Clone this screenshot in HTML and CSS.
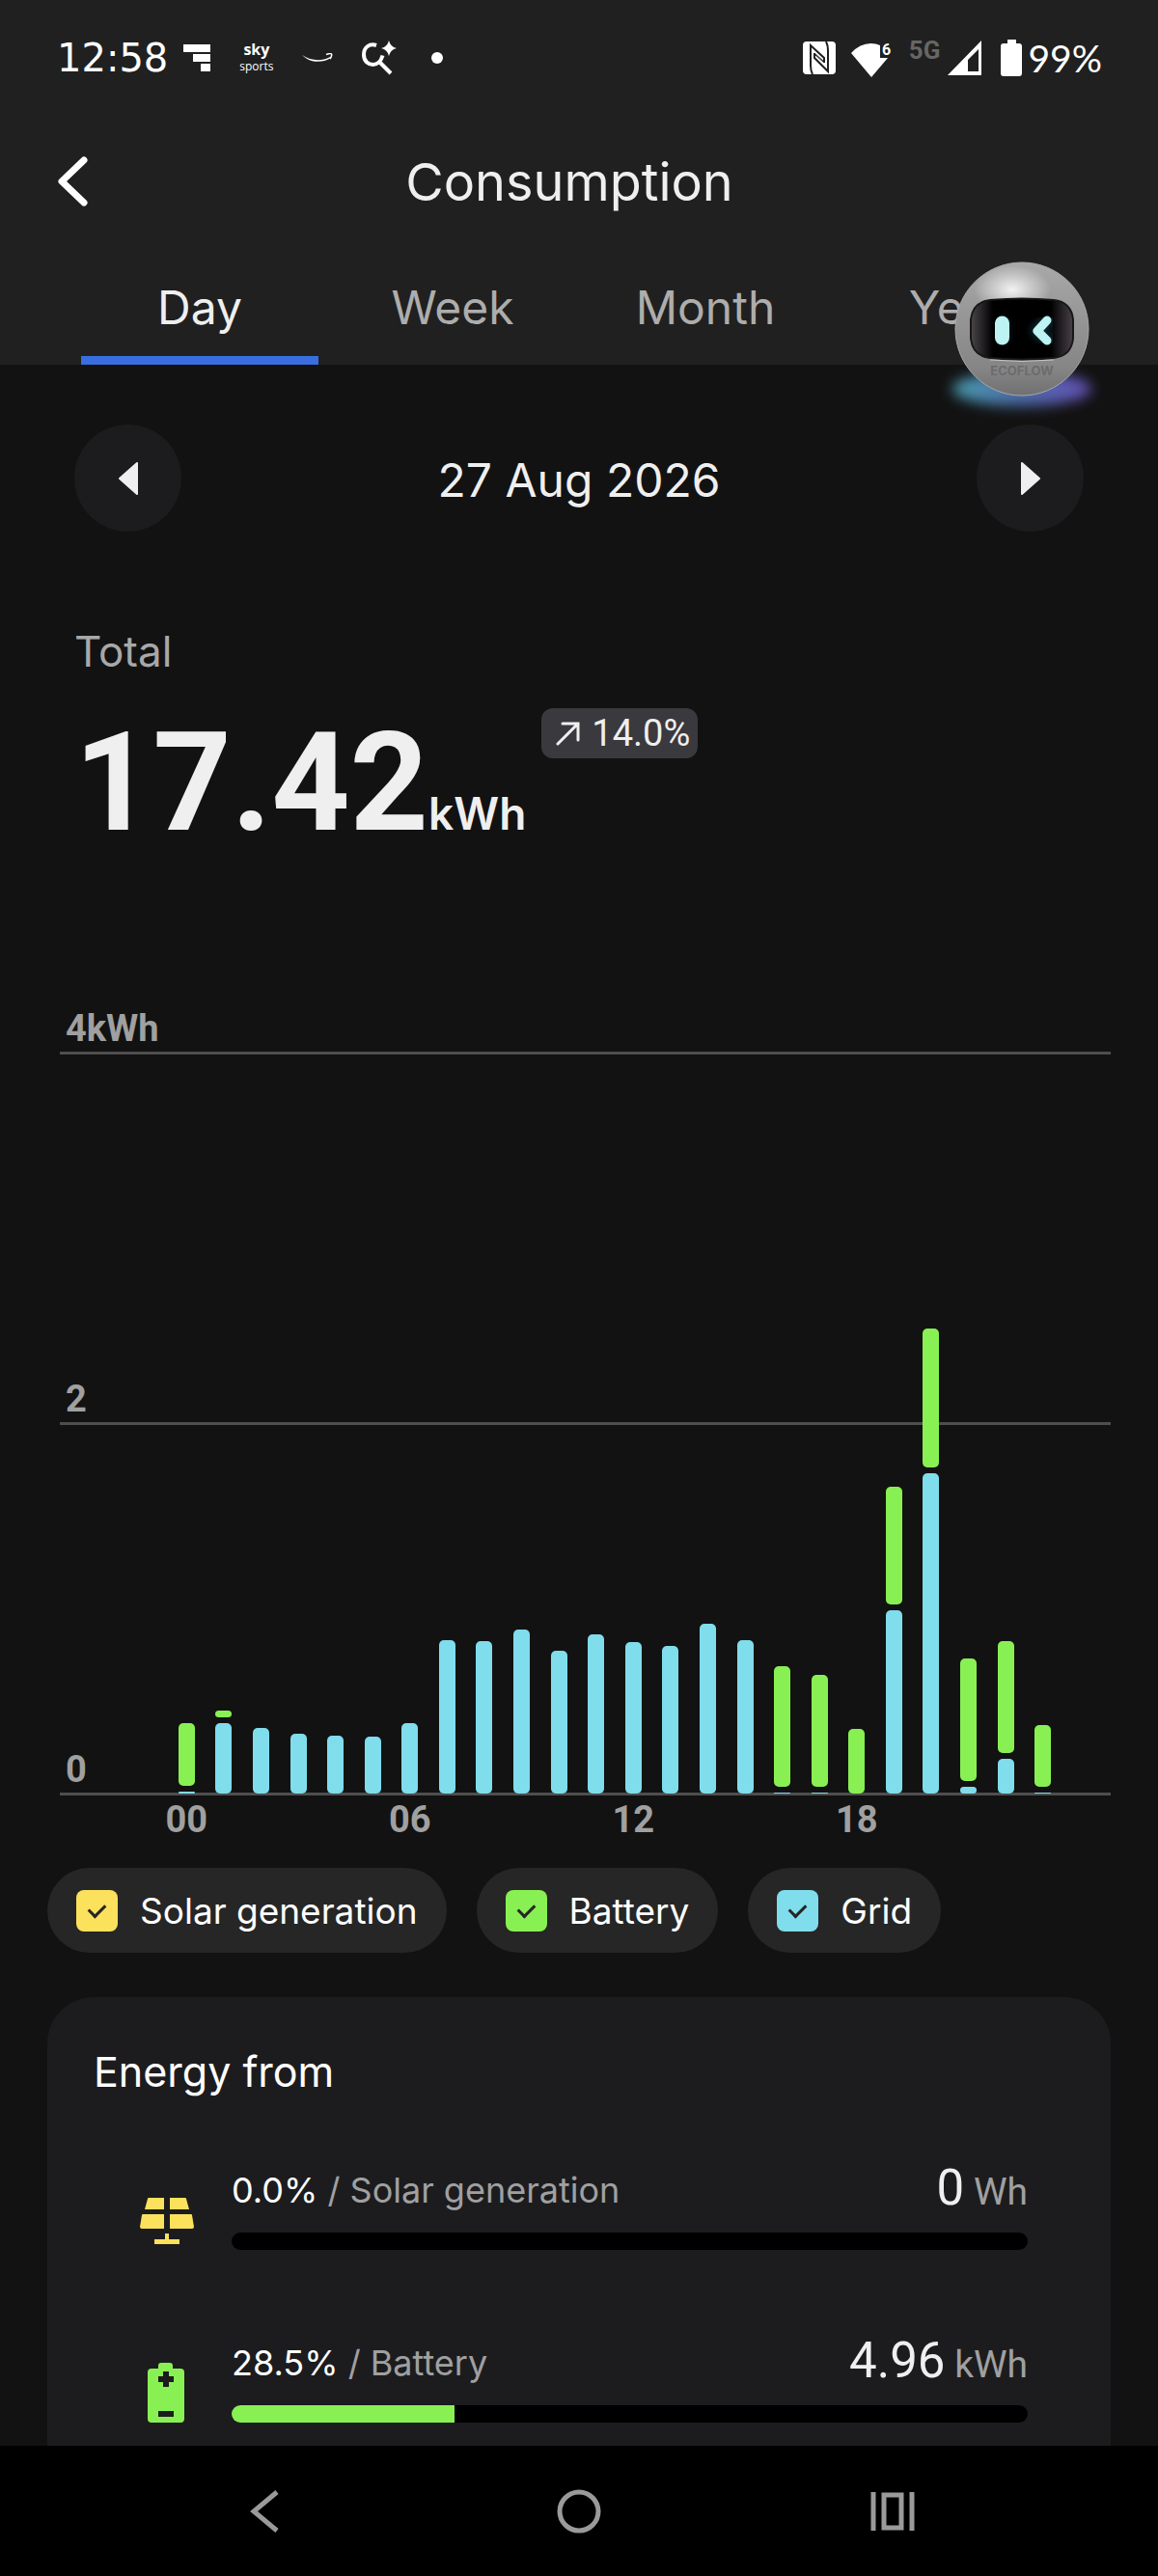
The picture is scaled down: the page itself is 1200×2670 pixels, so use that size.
FILE: index.html
```html
<!DOCTYPE html>
<html lang="en">
  <head>
    <meta charset="UTF-8" />
    <meta name="viewport" content="width=device-width, initial-scale=1.0" />
    <title>Consumption</title>
    <link rel="stylesheet" href="styles.css">
  </head>
  <body>
    <header class="header">
      <!-- System status bar -->
      <div class="status">
        <div class="status-left">
          <span class="clock">12:58</span>
          <svg width="28" height="28" viewBox="0 0 28 28" fill="#fff"><path d="M0 0h28v8H0zM10 10h18v8H10zM18 20h10v8H18z" /></svg>
          <span class="sky"><b>sky</b><small>sports</small></span>
          <svg width="32" height="10" viewBox="0 0 32 10" fill="none"><path d="M0 2C9 8 20 9 29 4l1 1C20 11 8 10 0 2z" fill="#fff" /><path d="M25 1.500c3-1 5-1 5.500-.5s0 3-1.500 5" stroke="#fff" stroke-width="1.500" /></svg>
          <svg width="36" height="36" viewBox="0 0 36 36" fill="none"><path d="M15 5C8 2.500 2 7 2 14.500S7 25 11.500 25C16 25 20 21 21.500 15.500" stroke="#fff" stroke-width="4" /><path d="M18.500 22.500L30 34" stroke="#fff" stroke-width="4" /><path d="M28 0q1.500 6.500 8 8-6.500 1.500-8 8-1.500-6.500-8-8 6.500-1.500 8-8z" fill="#fff" /></svg>
          <span class="dot"></span>
        </div>
        <div class="status-right">
          <svg width="34" height="36" viewBox="0 0 34 36"><rect y="1" width="34" height="34" rx="4" fill="#fff" /><g fill="none" stroke="#202020" stroke-width="2"><path d="M10 35C8.500 32 8 30 8 26V5l14 13v5" /><path d="M24 1c1.500 3 2 5 2 9v22L12 18v-5" /><path d="M13 15l9 8M12 13l10 9" stroke-width="1" /></g></svg>
          <svg width="44" height="40" viewBox="0 -4 44 40"><path d="M0 11Q9 1 20.500 1 26 1 30 3v13h8L21 36z" fill="#fff" /><text x="32" y="13" class="wifi-gen">6</text></svg>
          <span class="cell">
            <span class="network">5G</span>
            <svg width="35" height="36" viewBox="0 0 35 36"><path fill-rule="evenodd" d="M35 0v36H0zM32 9L21 20v12h11z" fill="#fff" /></svg>
          </span>
          <span class="power">
            <svg width="22" height="38" viewBox="0 0 22 38"><path d="M7 0h9v4h3q3 0 3 3v28q0 3-3 3H3q-3 0-3-3V7q0-3 3-3h4z" fill="#fff" /></svg>
            99%
          </span>
        </div>
      </div>

      <div class="title-bar">
        <button class="back" aria-label="Back">
          <svg width="32" height="52" viewBox="0 0 32 52" fill="none"><path d="M28 4L5 26l23 22" stroke="#fff" stroke-width="7" stroke-linecap="round" stroke-linejoin="round" /></svg>
        </button>
        <h1>Consumption</h1>
      </div>

      <nav class="tabs">
        <button class="tab active">Day</button>
        <button class="tab">Week</button>
        <button class="tab">Month</button>
        <button class="tab">Year</button>
      </nav>
    </header>

    <!-- Floating assistant -->
    <button class="assistant" aria-label="Assistant">
      <svg width="180" height="180" viewBox="0 0 180 180">
        <defs>
          <linearGradient id="glow"><stop offset="0" stop-color="#4a9db0" /><stop offset=".5" stop-color="#4c6aa8" /><stop offset="1" stop-color="#6650b8" /></linearGradient>
          <linearGradient id="shell" x2="0" y2="1"><stop offset="0" stop-color="#a9a9aa" /><stop offset=".5" stop-color="#929293" /><stop offset=".8" stop-color="#858586" /><stop offset="1" stop-color="#707071" /></linearGradient>
          <radialGradient id="shine"><stop offset="0" stop-color="#f2f2f2" /><stop offset="1" stop-color="#f2f2f2" stop-opacity="0" /></radialGradient>
          <linearGradient id="visor"><stop offset="0" stop-color="#4a464a" /><stop offset=".22" stop-color="#000" /><stop offset=".78" stop-color="#000" /><stop offset="1" stop-color="#4a4149" /></linearGradient>
          <filter id="blur" x="-20%" y="-50%" width="140%" height="200%"><feGaussianBlur stdDeviation="7" /></filter>
          <filter id="soft"><feGaussianBlur stdDeviation="3" /></filter>
        </defs>
        <ellipse cx="90" cy="137" rx="72" ry="18" fill="url(#glow)" filter="url(#blur)" />
        <circle cx="90" cy="75" r="69" fill="url(#shell)" stroke="#a8a8a8" />
        <ellipse cx="80" cy="34" rx="40" ry="25" fill="url(#shine)" />
        <path d="M37 65q2-18 20-20 33-3 66 0 18 2 20 20v20q-2 18-20 20-33 3-66 0-18-2-20-20z" fill="url(#visor)" stroke="#171718" stroke-width="2" />
        <path d="M57 107q33 3 66 0" stroke="#c4c4c4" fill="none" />
        <g fill="none" stroke-linecap="round" stroke-linejoin="round">
          <path d="M69.500 69v15M117 66l-11 11 11 10" stroke="#1a6070" stroke-width="15" opacity=".4" filter="url(#soft)" />
          <path d="M69.500 69v15" stroke="#bdf3f3" stroke-width="15" />
          <path d="M116 66l-10 11 10 10" stroke="#bdf3f3" stroke-width="9" />
        </g>
        <text x="90" y="123" text-anchor="middle" class="brand">ECOFLOW</text>
      </svg>
    </button>

    <main class="content">
      <div class="date-row">
        <button class="round" aria-label="Previous day">
          <svg width="22" height="36" viewBox="0 0 22 36"><path d="M20 2v32L2 18z" fill="#efefef" stroke="#efefef" stroke-width="2" stroke-linejoin="round" /></svg>
        </button>
        <span class="date">27 Aug 2026</span>
        <button class="round" aria-label="Next day">
          <svg width="22" height="36" viewBox="0 0 22 36"><path d="M2 2v32l18-16z" fill="#efefef" stroke="#efefef" stroke-width="2" stroke-linejoin="round" /></svg>
        </button>
      </div>

      <section class="total">
        <h2>Total</h2>
        <div class="total-row">
          <span class="total-value">17.42</span>
          <span class="total-unit">kWh</span>
          <span class="change">
            <svg width="26" height="26" viewBox="0 0 26 26" fill="none"><path d="M2 24L23 3M7 3h16v17" stroke="#efefef" stroke-width="3" stroke-linecap="round" /></svg>
            14.0%
          </span>
        </div>
      </section>

      <section class="chart">
        <div class="plot">
          <div class="gridlines">
            <div class="line">4kWh</div>
            <div class="line">2</div>
            <div class="line">0</div>
          </div>
          <div class="bars" id="bars"></div>
        </div>
        <div class="hours">
          <span>00</span>
          <span>06</span>
          <span>12</span>
          <span>18</span>
        </div>
      </section>

      <div class="legend">
        <label class="chip"><input type="checkbox" class="solar" checked />Solar generation</label>
        <label class="chip"><input type="checkbox" class="battery" checked />Battery</label>
        <label class="chip"><input type="checkbox" class="grid" checked />Grid</label>
      </div>

      <section class="card">
        <h2>Energy from</h2>
        <div class="source">
          <svg width="56" height="62" viewBox="0 0 56 62" fill="#fbe15c"><path d="M9 8h16v12H5l3-11q0-1 1-1zM31 8h16q1 0 1 1l3 11H31zM3 25h22v15H2q-2 0-2-2l2-12q0-1 1-1zM31 25h22q1 0 1 1l2 12q0 2-2 2H31zM26 45h4v6h11v5H15v-5h11z" /></svg>
          <div class="source-body">
            <div class="source-text">
              <span><b>0.0%</b> / Solar generation</span>
              <span class="amount"><b>0</b> Wh</span>
            </div>
            <div class="track"></div>
          </div>
        </div>
        <div class="source">
          <svg width="56" height="62" viewBox="0 0 56 62"><path fill-rule="evenodd" d="M22 0h9q3 0 3 3v3h8q4 0 4 4v48q0 4-4 4H12q-4 0-4-4V10q0-4 4-4h7V3q0-3 3-3zM24 9v5h-5v6h5v5h6v-5h5v-6h-5V9zM19 50v6h16v-6z" fill="#89f053" /></svg>
          <div class="source-body">
            <div class="source-text">
              <span><b>28.5%</b> / Battery</span>
              <span class="amount"><b>4.96</b> kWh</span>
            </div>
            <div class="track"><div class="fill battery" style="width: 28%"></div></div>
          </div>
        </div>
      </section>
    </main>

    <nav class="system-nav">
      <button aria-label="System back">
        <svg width="46" height="46" viewBox="0 0 46 46"><path d="M35 3L11 23l24 20" /></svg>
      </button>
      <button aria-label="Home">
        <svg width="46" height="46" viewBox="0 0 46 46"><circle cx="23" cy="23" r="20" /></svg>
      </button>
      <button aria-label="Recent apps">
        <svg width="46" height="46" viewBox="0 0 46 46"><path d="M3 3v40M43 3v40M14 6h18v34H14z" /></svg>
      </button>
    </nav>

    <script>
      // Hourly usage in Wh: [battery, grid]
      const usage = [
        [339, 10], [36, 380], [0, 354], [0, 323], [0, 313], [0, 307],
        [0, 380], [0, 828], [0, 823], [0, 885], [0, 771], [0, 859],
        [0, 818], [0, 797], [0, 917], [0, 828], [651, 5], [604, 5],
        [349, 0], [635, 990], [750, 1729], [661, 36], [604, 188], [333, 5],
      ];
      const maxWh = 4000;
      const bars = document.getElementById("bars");

      // One column per hour, battery stacked on top of grid
      usage.forEach(function (hour) {
        const column = document.createElement("div");
        column.className = "column";
        ["battery", "grid"].forEach(function (source, i) {
          if (hour[i] > 0) {
            const bar = document.createElement("div");
            bar.className = "bar " + source;
            bar.style.height = (hour[i] / maxWh) * 100 + "%";
            column.appendChild(bar);
          }
        });
        bars.appendChild(column);
      });
    </script>
  </body>
</html>
```
FILE: styles.css
```css
/* Global Styles */
* {
  box-sizing: border-box;
}

body {
  margin: 0;
  min-height: 100vh;
  display: flex;
  flex-direction: column;
  background-color: #121212;
  color: #fff;
  font-family: Inter, sans-serif;
  font-size: 37px;
}

h1,
h2 {
  margin: 0;
  font-weight: 400;
}

b {
  font-weight: 400;
}

button {
  padding: 0;
  border: none;
  background: none;
  color: inherit;
  font: inherit;
  cursor: pointer;
}

svg {
  display: block;
  flex: none;
}

.solar {
  background-color: #fbe15c;
}

.battery {
  background-color: #89f053;
}

.grid {
  background-color: #7fddec;
}

/* Header */
.header {
  background-color: #202020;
}

.status {
  display: flex;
  justify-content: space-between;
  align-items: center;
  height: 120px;
  padding: 0 58px 0 59px;
}

.status-left {
  display: flex;
  align-items: center;
  gap: 30px;
}

.clock {
  margin-right: -14px;
  font-family: "DejaVu Sans", sans-serif;
  font-size: 40px;
}

.sky {
  display: flex;
  flex-direction: column;
  align-items: center;
  font-family: "Open Sans", sans-serif;
  font-size: 16px;
  line-height: 17px;
}

.sky b {
  font-weight: 700;
}

.sky small {
  font-size: 12px;
}

.dot {
  width: 12px;
  height: 12px;
  margin-left: 6px;
  border-radius: 50%;
  background-color: #fff;
}

.status-right {
  display: flex;
  align-items: center;
  gap: 16px;
}

.wifi-gen {
  fill: #fff;
  font: 700 16px Roboto, sans-serif;
}

.cell,
.power {
  display: flex;
  align-items: center;
  gap: 7px;
}

.cell {
  margin-right: 4px;
}

.network {
  align-self: flex-start;
  color: #666;
  font: 700 26px/20px Roboto, sans-serif;
}

.power {
  font-family: Lato, sans-serif;
  font-size: 39px;
}

.title-bar {
  display: grid;
  grid-template-columns: 91px 1fr 111px;
  align-items: center;
  height: 136px;
}

.title-bar h1 {
  font-size: 54px;
  text-align: center;
  color: #efefef;
}

.back {
  justify-self: end;
}

.tabs {
  display: grid;
  grid-template-columns: repeat(4, 1fr);
  gap: 16px;
  padding: 0 84px;
}

.tab {
  padding: 39px 0 26px;
  border-bottom: 9px solid transparent;
  font-size: 48px;
  line-height: 48px;
  color: #adadad;
}

.tab.active {
  border-color: #386ee0;
  color: #efefef;
}

.assistant {
  position: absolute;
  top: 266px;
  right: 51px;
}

.brand {
  fill: #6c6c6e;
  font: 700 13px Inter, sans-serif;
}

/* Content */
.content {
  flex: 1;
  display: flex;
  flex-direction: column;
  padding: 62px 49px 0;
}

.date-row {
  display: flex;
  justify-content: space-between;
  align-items: center;
  padding: 0 28px;
}

.round {
  display: grid;
  place-items: center;
  width: 111px;
  height: 111px;
  border-radius: 50%;
  background-color: #1c1c1e;
}

.date {
  padding-top: 4px;
  font-size: 48px;
  color: #efefef;
}

.total {
  padding: 0 28px;
  margin-top: 100px;
}

.total h2 {
  font-size: 44px;
  line-height: 48px;
  color: #a8a8a8;
}

.total-row {
  display: flex;
  align-items: baseline;
  margin-top: 35px;
  color: #efefef;
}

.total-value {
  font: 700 142px/156px Roboto, sans-serif;
}

.total-unit {
  font-size: 46px;
  font-weight: 600;
}

.change {
  display: flex;
  align-items: center;
  align-self: flex-start;
  gap: 11px;
  height: 52px;
  margin-left: 16px;
  padding: 0 8px 0 15px;
  border-radius: 12px;
  background-color: #3a393e;
  font-family: Roboto, sans-serif;
  font-size: 38px;
}

/* Chart */
.chart {
  margin: 143px 0 0 13px;
  color: #a0a0a0;
  font-family: Roboto, sans-serif;
  font-size: 38px;
  font-weight: 700;
}

.plot {
  display: grid;
}

.gridlines,
.bars {
  grid-area: 1 / 1;
}

.line {
  display: flex;
  align-items: flex-end;
  height: 384px;
  padding: 0 0 4px 6px;
  border-bottom: 3px solid #4e4e4e;
  line-height: 40px;
}

.line:first-child {
  height: 60px;
}

.bars,
.hours {
  display: grid;
  grid-template-columns: repeat(24, 1fr);
  padding: 0 51px 0 112px;
}

.bars {
  align-self: end;
  height: 768px;
  margin-bottom: 2px;
}

.column {
  display: flex;
  flex-direction: column;
  justify-content: flex-end;
  align-items: center;
  gap: 6px;
}

.bar {
  flex: none;
  width: 17px;
  border-radius: 5px;
}

.hours {
  grid-template-columns: repeat(4, 1fr);
  margin-top: 5px;
  line-height: 40px;
}

.hours span {
  width: calc(100% / 6);
  display: flex;
  justify-content: center;
}

/* Legend */
.legend {
  display: flex;
  gap: 31px;
  margin-top: 30px;
}

.chip {
  display: flex;
  align-items: center;
  gap: 23px;
  height: 88px;
  padding: 0 30px;
  border-radius: 44px;
  background-color: #262626;
}

.chip input {
  appearance: none;
  display: grid;
  place-items: center;
  width: 43px;
  height: 43px;
  margin: 0;
  border-radius: 8px;
}

.chip input:checked::after {
  content: "";
  width: 8px;
  height: 14px;
  margin-bottom: 4px;
  border: solid #262626;
  border-width: 0 3px 3px 0;
  transform: rotate(45deg);
}

/* Energy sources */
.card {
  flex: 1;
  margin-top: 46px;
  padding: 53px 86px 24px 48px;
  border-radius: 48px 48px 0 0;
  background-color: #1c1c1e;
}

.card h2 {
  margin-bottom: 69px;
  font-size: 43px;
  line-height: 48px;
}

.source {
  display: flex;
  align-items: flex-end;
  gap: 39px;
  padding-left: 48px;
}

.source + .source {
  margin-top: 87px;
}

.source-body {
  flex: 1;
}

.source-text {
  display: flex;
  justify-content: space-between;
  align-items: center;
  height: 60px;
  font-size: 36px;
  line-height: 60px;
  color: #a0a0a0;
}

.source-text b {
  color: #fff;
}

.amount {
  font-family: Roboto, sans-serif;
  font-size: 39px;
}

.source-text .amount b {
  font-size: 51px;
  color: #efefef;
}

.track {
  height: 18px;
  margin-top: 14px;
  border-radius: 9px;
  background-color: #000;
  overflow: hidden;
}

.fill {
  height: 100%;
}

/* System navigation */
.system-nav {
  display: flex;
  justify-content: space-between;
  align-items: center;
  height: 135px;
  padding: 0 252px;
  background-color: #000;
}

.system-nav svg {
  fill: none;
  stroke: #9a9a9a;
  stroke-width: 5px;
}
```
